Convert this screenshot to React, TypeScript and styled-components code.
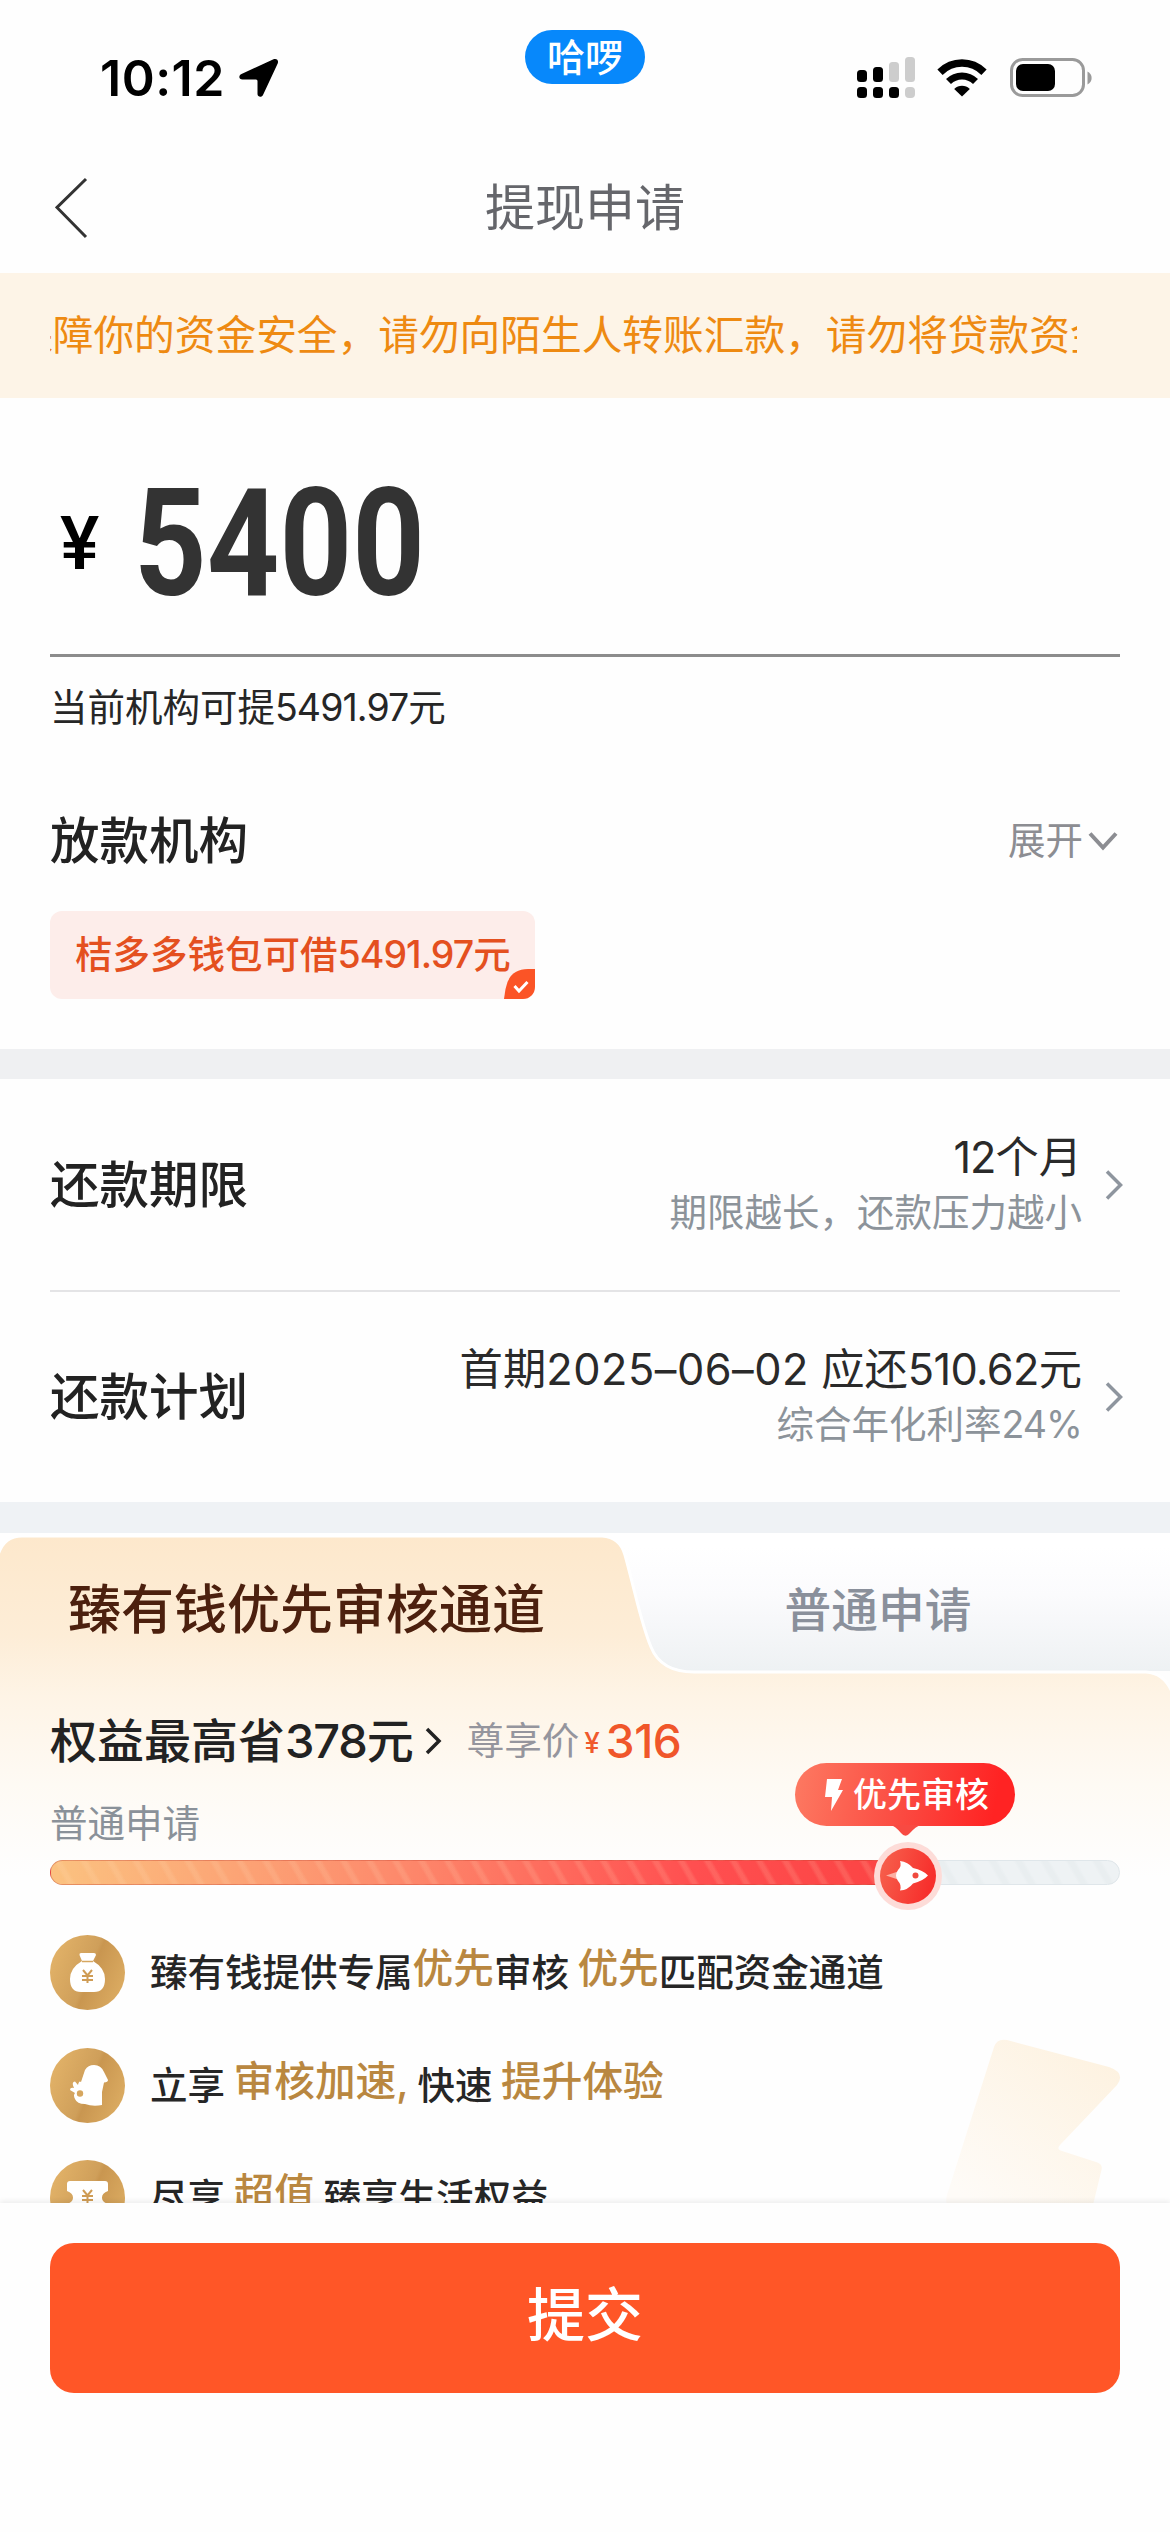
import React from "react";
import styled, { createGlobalStyle } from "styled-components";

const GlobalStyle = createGlobalStyle`
  * { box-sizing: border-box; }
  body { margin: 0; background: #fff; }
`;

const Screen = styled.div`
  width: 1170px;
  height: 2532px;
  display: flex;
  flex-direction: column;
  overflow: hidden;
  background: #fefefe;
  color: #262626;
  font-family: Inter, "Noto Sans CJK SC", sans-serif;
  white-space: nowrap;
`;

const StatusBar = styled.header`
  position: relative;
  flex: none;
  height: 156px;
  padding: 0 78px 0 100px;
  display: flex;
  justify-content: space-between;
`;

const StatusLeft = styled.div`
  height: 156px;
  display: flex;
  align-items: center;
  gap: 14px;
`;

const Clock = styled.span`
  font-size: 50px;
  font-weight: 600;
  color: #000;
  letter-spacing: 0.5px;
`;

const StatusRight = styled.div`
  height: 156px;
  display: flex;
  align-items: center;
`;

const AppBadge = styled.div`
  position: absolute;
  left: 525px;
  top: 30px;
  width: 120px;
  height: 54px;
  border-radius: 27px;
  background: #0788fb;
  color: #fff;
  font-size: 38px;
  font-weight: 500;
  line-height: 54px;
  text-align: center;
`;

const NavBar = styled.nav`
  flex: none;
  height: 117px;
  padding: 0 55px 14px;
  display: grid;
  grid-template-columns: 60px 1fr 60px;
  align-items: center;
`;

const NavTitle = styled.h1`
  margin: 0;
  text-align: center;
  font-size: 50px;
  font-weight: 400;
  line-height: 60px;
  color: #65666b;
`;

const Notice = styled.div`
  flex: none;
  height: 125px;
  padding: 0 93px 0 50px;
  background: #fdf4e7;
  display: flex;
  align-items: center;
`;

const NoticeClip = styled.div`
  flex: 1;
  overflow: hidden;
  display: flex;
  justify-content: flex-start;
`;

const NoticeText = styled.span`
  margin-left: -38px;
  font-size: 40.7px;
  line-height: 60px;
  color: #ee8a12;
`;

const Content = styled.main`
  flex: 1;
  min-height: 0;
  overflow: hidden;
`;

const Section = styled.section`
  padding: 0 50px;
`;

const AmountRow = styled.div`
  height: 259px;
  padding: 35px 0 0 10px;
  display: flex;
  align-items: center;
  border-bottom: 3px solid #8c8c8c;
`;

const Currency = styled.span`
  width: 74px;
  font-size: 74px;
  font-weight: 500;
  line-height: 74px;
  color: #000;
  font-family: Roboto, Inter, sans-serif;
`;

const Amount = styled.span`
  font-family: Roboto, Inter, sans-serif;
  font-size: 150px;
  font-weight: 700;
  line-height: 150px;
  color: #333;
  transform: scaleX(0.845);
  transform-origin: left center;
`;

const Caption = styled.p`
  margin: 0;
  height: 101px;
  line-height: 101px;
  font-size: 37.5px;
`;

const Num = styled.span<{ $track?: number }>`
  letter-spacing: ${(p) => p.$track ?? -0.025}em;
`;

const SectionHead = styled.div`
  height: 165px;
  display: flex;
  align-items: center;
  justify-content: space-between;
`;

const Heading = styled.h2`
  margin: 0;
  font-size: 49.5px;
  font-weight: 500;
  line-height: 60px;
  color: #222;
`;

const Expand = styled.div`
  display: flex;
  align-items: center;
  gap: 5px;
  padding-right: 2px;
  font-size: 37.5px;
  line-height: 50px;
  color: #8c8d92;
`;

const ChipRow = styled.div`
  height: 126px;
  display: flex;
  align-items: flex-start;
`;

const Chip = styled.div`
  position: relative;
  width: 485px;
  height: 88px;
  margin-top: -12px;
  padding-left: 25px;
  border-radius: 12px;
  background: #fdedea;
  color: #e4501f;
  font-size: 37.5px;
  font-weight: 500;
  line-height: 88px;
  overflow: hidden;
`;

const ChipMark = styled.svg`
  position: absolute;
  right: 0;
  bottom: 0;
`;

const Band = styled.div<{ $tone: string; $height: number }>`
  height: ${(p) => p.$height}px;
  background: ${(p) => p.$tone};
`;

const Row = styled.div<{ $last?: boolean }>`
  height: ${(p) => (p.$last ? 210 : 213)}px;
  display: flex;
  align-items: center;
  border-bottom: ${(p) => (p.$last ? "none" : "2px solid #e4e4e6")};
`;

const RowValue = styled.div`
  flex: 1;
  display: flex;
  flex-direction: column;
  align-items: flex-end;
  margin-right: 23px;
`;

const RowMain = styled.div`
  font-size: 43.3px;
  line-height: 56px;
  color: #2a2a2a;
`;

const RowSub = styled.div`
  font-size: 37.5px;
  line-height: 56px;
  color: #8c939a;
`;

const RowArrow = styled.svg`
  flex: none;
  margin-right: -3px;
`;

const Promo = styled.section`
  position: relative;
  height: 700px;
`;

const PanelShape = styled.svg`
  position: absolute;
  left: 0;
  top: 0;
`;

const Tabs = styled.div`
  height: 138px;
  display: flex;
  background: linear-gradient(#ffffff 10%, #fbfbfd 45%, #eef1f3);
`;

const Tab = styled.div<{ $active?: boolean }>`
  position: relative;
  width: ${(p) => (p.$active ? 613 : 530)}px;
  padding-top: 47px;
  line-height: 60px;
  text-align: center;
  font-weight: 500;
  font-size: ${(p) => (p.$active ? 53 : 46.7)}px;
  color: ${(p) => (p.$active ? "#4c200e" : "#8a909b")};
`;

const PromoBody = styled.div`
  position: relative;
  padding: 40px 50px 0;
`;

const BenefitLine = styled.div`
  height: 60px;
  display: flex;
  align-items: center;
  line-height: 60px;
  font-weight: 500;
  font-size: 47px;
  color: #222;
`;

const PriceLabel = styled.span`
  margin-left: 25px;
  font-size: 37.5px;
  font-weight: 400;
  color: #95959d;
`;

const PriceMark = styled.span`
  margin: 4px 6px 0 5px;
  font-size: 28px;
  color: #f05a2c;
`;

const Price = styled.span`
  font-size: 46px;
  color: #f0562a;
`;

const QueueLabel = styled.div`
  margin-top: 28px;
  height: 50px;
  line-height: 50px;
  font-size: 37.5px;
  color: #8a9199;
`;

const Track = styled.div`
  position: relative;
  margin-top: 11px;
  height: 25px;
  border-radius: 13px;
  background: repeating-linear-gradient(60deg, #eef2f4 0 12px, #e9eef0 15px 19px, #eef2f4 22px 22.5px);
  border: 1px solid #dfe6ea;
`;

const Fill = styled.div`
  position: absolute;
  left: -1px;
  top: -1px;
  width: 860px;
  height: 25px;
  border-radius: 13px 0 0 13px;
  border: 1px solid rgba(200, 70, 50, 0.4);
  background:
    repeating-linear-gradient(60deg, transparent 0 13px, rgba(255, 225, 190, 0.15) 16px 19px, transparent 22px 22.5px),
    linear-gradient(90deg, #fbc280, #fd8a6c 40%, #ff4f50 75%, #fb4343);
`;

const Bubble = styled.div`
  position: absolute;
  left: 744px;
  top: -98px;
  width: 220px;
  height: 63px;
  padding-left: 30px;
  display: flex;
  align-items: center;
  gap: 10px;
  border-radius: 32px;
  background: linear-gradient(100deg, #fd7a62, #fb4a41 50%, #ff2323 90%);
  color: #fff;
  font-size: 34px;
  font-weight: 500;
  line-height: 60px;
`;

const BubbleTip = styled.svg`
  position: absolute;
  left: 96px;
  top: 62px;
`;

const Knob = styled.svg`
  position: absolute;
  left: 822px;
  top: -20px;
`;

const Perks = styled.ul`
  margin: 50px 0 0;
  padding: 0;
  list-style: none;
  display: flex;
  flex-direction: column;
  gap: 37.5px;
`;

const Perk = styled.li`
  height: 75px;
  display: flex;
  align-items: center;
  gap: 25px;
  font-size: 37.5px;
  font-weight: 500;
  line-height: 60px;
  color: #262626;
  word-spacing: -1.5px;
`;

const Gold = styled.em`
  position: relative;
  top: -3px;
  font-style: normal;
  font-size: 40.7px;
  color: #b98740;
`;

const Decoration = styled.svg`
  position: absolute;
  right: 46px;
  top: 500px;
`;

const Footer = styled.footer`
  position: relative;
  flex: none;
  height: 329px;
  padding: 40px 50px 0;
  background: #fefefe;
  box-shadow: 0 -2px 5px rgba(0, 0, 0, 0.07);
`;

const Submit = styled.button`
  display: block;
  width: 100%;
  height: 150px;
  padding: 0 0 6px;
  border: none;
  border-radius: 24px;
  background: #ff5627;
  color: #fff;
  font-family: inherit;
  font-size: 58px;
  font-weight: 500;
  line-height: 140px;
`;

const Signal = () => (
  <svg width="58" height="42" viewBox="0 0 58 42">
    <g fill="#000">
      <rect x="0" y="13" width="10" height="12" rx="3.5" />
      <rect x="16" y="10" width="10" height="15" rx="3.5" />
      <rect x="0" y="30" width="10" height="11" rx="3.5" />
      <rect x="16" y="30" width="10" height="11" rx="3.5" />
      <rect x="32" y="30" width="10" height="11" rx="3.5" />
    </g>
    <g fill="#cdcdcd">
      <rect x="32" y="5" width="10" height="20" rx="3.5" />
      <rect x="48" y="0" width="10" height="25" rx="3.5" />
      <rect x="48" y="30" width="10" height="11" rx="4" />
    </g>
  </svg>
);

const WifiIcon = styled.svg`
  margin-left: 22px;
`;

const Wifi = () => (
  <WifiIcon width="50" height="38" viewBox="0 0 50 38">
    <path d="M3 13.200 C15.500 1 34.500 1 47 13.200" fill="none" stroke="#000" strokeWidth="7.500" />
    <path d="M11.500 22.500 C19 15 31 15 38.500 22.500" fill="none" stroke="#000" strokeWidth="7" />
    <path d="M17.200 30 C21.500 25.800 28.500 25.800 32.800 30 L25 37.500 Z" fill="#000" />
  </WifiIcon>
);

const BatteryIcon = styled.svg`
  margin-left: 23px;
`;

const Battery = () => (
  <BatteryIcon width="82" height="40" viewBox="0 0 82 40">
    <rect x="1.500" y="1.500" width="72" height="36" rx="11" fill="none" stroke="#9a9a9a" strokeWidth="3" />
    <rect x="6" y="6" width="39" height="27" rx="7" fill="#000" />
    <path d="M77.500 13.500 C83 16 83 24 77.500 26.500 Z" fill="#9a9a9a" />
  </BatteryIcon>
);

const LocationArrow = () => (
  <svg width="40" height="40" viewBox="0 0 40 40">
    <path d="M2.500 16 L34.500 1.300 C37.500 0 40 2.300 38.700 5.400 L24 37 C22.800 39.800 18.500 39.200 18.500 36 L18.500 23 Q18.500 21.500 17 21.500 L3.500 21.500 C-0.400 21.500 -0.600 17.400 2.500 16 Z" fill="#000" />
  </svg>
);

const BackArrow = () => (
  <svg width="33" height="62" viewBox="0 0 33 62">
    <path d="M31 2 L2 30.500 L31 60" fill="none" stroke="#333" strokeWidth="3" />
  </svg>
);

const RightArrow = () => (
  <RowArrow width="18" height="30" viewBox="0 0 18 30">
    <path d="M2 1.500 L15.500 15 L2 28.500" fill="none" stroke="#8e959e" strokeWidth="3.500" />
  </RowArrow>
);

const BenefitArrow = styled.svg`
  margin-left: 10px;
`;

const GoldDisc = ({ id, children }: { id: string; children: React.ReactNode }) => (
  <svg width="75" height="75" viewBox="0 0 75 75">
    <defs>
      <linearGradient id={id} x1="0" y1="0.300" x2="1" y2="0.700">
        <stop offset="0" stopColor="#e2b268" />
        <stop offset="0.500" stopColor="#cf9f5a" />
        <stop offset="0.550" stopColor="#c99650" />
        <stop offset="1" stopColor="#dcac62" />
      </linearGradient>
    </defs>
    <circle cx="37.500" cy="37.500" r="37.500" fill={`url(#${id})`} />
    {children}
  </svg>
);

const YuanMark = ({ y }: { y: number }) => (
  <path
    d={`M33 ${y} l4.500 5.500 l4.500 -5.500 M37.500 ${y + 5} v8 M32 ${y + 6} h11 M32 ${y + 10} h11`}
    fill="none"
    stroke="#cf9c55"
    strokeWidth="2"
  />
);

export default function App() {
  return (
    <>
      <GlobalStyle />
      <Screen>
        <StatusBar>
          <StatusLeft>
            <Clock>10:12</Clock>
            <LocationArrow />
          </StatusLeft>
          <AppBadge>哈啰</AppBadge>
          <StatusRight>
            <Signal />
            <Wifi />
            <Battery />
          </StatusRight>
        </StatusBar>
        <NavBar>
          <BackArrow />
          <NavTitle>提现申请</NavTitle>
        </NavBar>
        <Notice>
          <NoticeClip>
            <NoticeText>保障你的资金安全，请勿向陌生人转账汇款，请勿将贷款资金</NoticeText>
          </NoticeClip>
        </Notice>
        <Content>
          <Section>
            <AmountRow>
              <Currency>¥</Currency>
              <Amount>5400</Amount>
            </AmountRow>
            <Caption>
              当前机构可提<Num>5491.97</Num>元
            </Caption>
            <SectionHead>
              <Heading>放款机构</Heading>
              <Expand>
                展开
                <svg width="30" height="20" viewBox="0 0 30 20">
                  <path d="M2 2.500 L15 16.500 L28 2.500" fill="none" stroke="#8c8d92" strokeWidth="4" />
                </svg>
              </Expand>
            </SectionHead>
            <ChipRow>
              <Chip>
                桔多多钱包可借<Num>5491.97</Num>元
                <ChipMark width="31" height="30" viewBox="0 0 31 30">
                  <path d="M0 30 L1.500 20 Q5 0 24 0 H31 V30 Z" fill="#fb5426" />
                  <path d="M10.500 17 L15 22 L23.500 13" fill="none" stroke="#fff" strokeWidth="3" />
                </ChipMark>
              </Chip>
            </ChipRow>
          </Section>
          <Band $tone="#eff0f2" $height={30} />
          <Section>
            <Row>
              <Heading>还款期限</Heading>
              <RowValue>
                <RowMain>
                  <Num>12</Num>个月
                </RowMain>
                <RowSub>期限越长，还款压力越小</RowSub>
              </RowValue>
              <RightArrow />
            </Row>
            <Row $last>
              <Heading>还款计划</Heading>
              <RowValue>
                <RowMain>
                  首期<Num $track={0.012}>2025–06–02</Num> 应还<Num $track={-0.015}>510.62</Num>元
                </RowMain>
                <RowSub>
                  综合年化利率<Num>24%</Num>
                </RowSub>
              </RowValue>
              <RightArrow />
            </Row>
          </Section>
          <Band $tone="#eff2f5" $height={31} />
          <Promo>
            <PromoHeader />
            <Decoration width="180" height="176" viewBox="0 0 180 176">
              <defs>
                <linearGradient id="deco" x1="1" y1="0" x2="0.200" y2="1">
                  <stop offset="0" stopColor="#fdf1de" />
                  <stop offset="1" stopColor="#fefbf7" />
                </linearGradient>
              </defs>
              <path
                d="M50 14 Q53 5 63 7 L165 34 Q182 40 173 52 L116 112 Q112 116 118 118 L152 129 Q160 131 157 139 L148 176 H8 Q0 172 3 162 Z"
                fill="url(#deco)"
              />
            </Decoration>
            <PromoBody>
              <BenefitLine>
                权益最高省<Num>378</Num>元
                <BenefitArrow width="18" height="28" viewBox="0 0 18 28">
                  <path d="M3 2 L15 14 L3 26" fill="none" stroke="#222" strokeWidth="3.500" />
                </BenefitArrow>
                <PriceLabel>尊享价</PriceLabel>
                <PriceMark>¥</PriceMark>
                <Price>
                  <Num $track={-0.01}>316</Num>
                </Price>
              </BenefitLine>
              <QueueLabel>普通申请</QueueLabel>
              <Track>
                <Fill />
                <Bubble>
                  <svg width="18" height="34" viewBox="0 0 18 34">
                    <path d="M2 1 H17 L13 12 H18 L6 33 L7 19 H0 Z" fill="#fff" />
                  </svg>
                  优先审核
                  <BubbleTip width="30" height="12" viewBox="0 0 30 12">
                    <path d="M0 0 H30 Q25 1 18 9 Q14 13 10 8 Q4 1 0 0 Z" fill="#f84a42" />
                  </BubbleTip>
                </Bubble>
                <Knob width="70" height="70" viewBox="0 0 70 70">
                  <defs>
                    <linearGradient id="knob" x1="0" y1="0" x2="1" y2="0.300">
                      <stop offset="0" stopColor="#f6644f" />
                      <stop offset="1" stopColor="#f72f2c" />
                    </linearGradient>
                  </defs>
                  <circle cx="35" cy="35" r="34" fill="#fddcd8" />
                  <circle cx="35" cy="35" r="28" fill="url(#knob)" />
                  <path d="M13 34.500 L25 30.500 V38.500 Z" fill="#fbb0a4" />
                  <path d="M27 20 Q35 21 40 27 Q50 29 55 34.500 Q50 40 40 42.500 Q35 49 27 49.500 Q29 44 25 40 Q23 37 23 34.500 Q23 32 25 29 Q29 25 27 20 Z" fill="#fff" />
                  <circle cx="42.500" cy="34.500" r="3" fill="#f04a3e" />
                </Knob>
              </Track>
              <Perks>
                <Perk>
                  <GoldDisc id="disc-bag">
                    <path d="M29.500 20 Q29 17.500 32 18 H43 Q46 17.500 46 20 L43 26 Q55 33 55 44 Q55 57 44 57 H31 Q20 57 20 44 Q20 33 32 26 Z" fill="#fff" />
                    <path d="M32 26.500 H43" stroke="#d6a760" strokeWidth="1.500" />
                    <YuanMark y={35} />
                  </GoldDisc>
                  <span>
                    臻有钱提供专属<Gold>优先</Gold>审核 <Gold>优先</Gold>匹配资金通道
                  </span>
                </Perk>
                <Perk>
                  <GoldDisc id="disc-hand">
                    <path d="M31 34 L35 22 Q38 17 44 17 Q51 17 54 24 L58 32 Q58 34 54 34.500 L52 44 V57 Q43 59 35 56 Q27 56 25 51 Q23 47 25 45 L20 42 Q20 39 24 40 Q21 34 25 33.500 L28 37 Q29 32 31 34 Z" fill="#fff" />
                    <circle cx="30" cy="45.500" r="3.200" fill="#d6a65e" />
                  </GoldDisc>
                  <span>
                    立享 <Gold>审核加速, </Gold>快速 <Gold>提升体验</Gold>
                  </span>
                </Perk>
                <Perk>
                  <GoldDisc id="disc-ticket">
                    <path d="M20 21 H55 Q58 21 58 24 V31 Q52 33 52 37.500 Q52 42 58 44 V51 Q58 54 55 54 H20 Q17 54 17 51 V44 Q23 42 23 37.500 Q23 33 17 31 V24 Q17 21 20 21 Z" fill="#fff" />
                    <YuanMark y={30} />
                  </GoldDisc>
                  <span>
                    尽享 <Gold>超值</Gold> 臻享生活权益
                  </span>
                </Perk>
              </Perks>
            </PromoBody>
          </Promo>
        </Content>
        <Footer>
          <Submit>提交</Submit>
        </Footer>
      </Screen>
    </>
  );
}

function PromoHeader() {
  return (
    <Tabs>
      <PanelShape width="1170" height="400" viewBox="0 0 1170 400">
        <defs>
          <linearGradient id="panel" x1="0" y1="0" x2="0" y2="1">
            <stop offset="0" stopColor="#fde8cc" />
            <stop offset="0.250" stopColor="#fdedd7" />
            <stop offset="0.400" stopColor="#fef4e6" />
            <stop offset="0.620" stopColor="#fefaf4" />
            <stop offset="0.850" stopColor="#fefefe" />
            <stop offset="1" stopColor="#fefefe" />
          </linearGradient>
        </defs>
        <path
          d="M-3 404 V26 Q2 3 22 3 H602 Q620 4 625 22 C637 66 641 90 651 114 Q661 139 694 139 H1146 Q1166 140 1174 164 V404 Z"
          fill="url(#panel)"
          stroke="#fff"
          strokeWidth="3"
        />
      </PanelShape>
      <Tab $active>臻有钱优先审核通道</Tab>
      <Tab>普通申请</Tab>
    </Tabs>
  );
}
